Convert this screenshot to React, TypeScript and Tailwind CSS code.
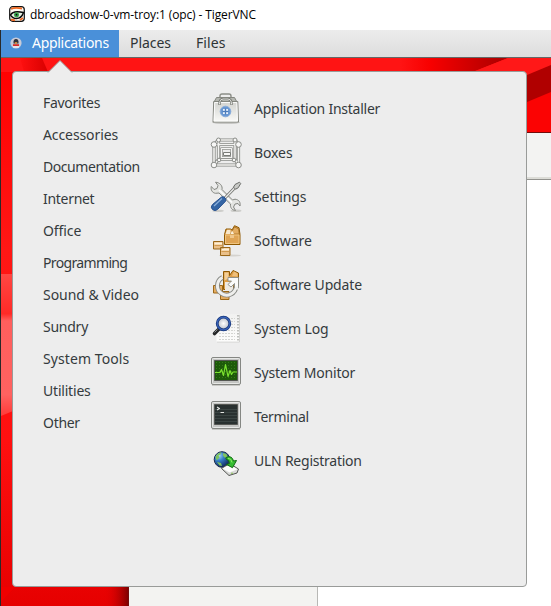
import React from "react";

const categories: [string, string][] = [
  ["Favorites", "tracking-[-0.3px]"],
  ["Accessories", "tracking-[-0.1px]"],
  ["Documentation", "tracking-[-0.44px]"],
  ["Internet", "tracking-[-0.3px]"],
  ["Office", "tracking-[-0.1px]"],
  ["Programming", "tracking-[-0.65px]"],
  ["Sound & Video", "tracking-[-0.05px]"],
  ["Sundry", "tracking-[-0.25px]"],
  ["System Tools", "tracking-[0.08px]"],
  ["Utilities", "tracking-[-0.2px]"],
  ["Other", "tracking-[-0.3px]"],
];

function Icon({ children }: { children: React.ReactNode }) {
  return (
    <svg width="32" height="32" viewBox="0 0 32 32" fill="none" strokeLinejoin="round" className="shrink-0 translate-y-px">
      {children}
    </svg>
  );
}

function InstallerIcon() {
  return (
    <Icon>
      <defs>
        <linearGradient id="bag" x2="0" y2="1">
          <stop stopColor="#d2d3cf" />
          <stop offset="1" stopColor="#fafaf8" />
        </linearGradient>
      </defs>
      <ellipse cx="16" cy="29.600" rx="14" ry="1.500" fill="#c7c7c5" />
      <path d="M10 5V3Q10 1 12 1h7q2 0 2 2v2" stroke="#8b8d86" strokeWidth="1.400" />
      <path d="M6.500 4.500h18l3 5.500h-24z" fill="#b5b7b1" stroke="#858780" />
      <path d="M3.700 8.500h24.100l.7 20.500H3z" fill="url(#bag)" stroke="#858780" />
      <path d="M4.700 9.500h22.100l.6 18.500H4.100z" stroke="#fff" strokeOpacity=".85" />
      <path d="M9.500 12V9.500Q10 6 13 6h5q3 0 3.500 3.500V12" stroke="#6d6f69" strokeWidth="2.200" />
      <path d="M9.500 11.500v-2Q10 6 13 6h5q3 0 3.500 3.500v2" stroke="#e5e6e2" />
      <circle cx="15.500" cy="18.500" r="5.300" fill="#6a98d3" stroke="#86abd9" />
      <path d="M12.500 18.500h6M15.500 15.500v6" stroke="#4c7cba" />
      <g fill="#e9f0f9">
        <rect x="13" y="16" width="1.800" height="1.800" />
        <rect x="16.200" y="16" width="1.800" height="1.800" />
        <rect x="13" y="19.200" width="1.800" height="1.800" />
        <rect x="16.200" y="19.200" width="1.800" height="1.800" />
      </g>
    </Icon>
  );
}

const frame =
  "M4 7.500h24.500v20.500H4zM8.500 3h16.500v19.500H8.500zM4 7.500 8.500 3M28.500 7.500 25 3M4 28 8.500 22.500M28.500 28 25 22.500";

function BoxesIcon() {
  return (
    <Icon>
      <path d={frame} stroke="#858783" strokeWidth="3.200" />
      <path d={frame} stroke="#f3f3f1" strokeWidth="1.600" />
      <path d="M11.500 11.500h10v9h-10z" stroke="#90928e" strokeWidth="2.600" />
      <path d="M11.500 11.500h10v9h-10z" stroke="#f5f5f4" strokeWidth="1.200" />
      <path d="M13.500 15.500h7v3h-7z" fill="#f8f8f7" stroke="#7a7c78" />
      <g fill="#f7f7f6" stroke="#8a8c88">
        <circle cx="4" cy="7.500" r="2.800" />
        <circle cx="28.500" cy="7.500" r="2.800" />
        <circle cx="4" cy="28" r="2.800" />
        <circle cx="28.500" cy="28" r="2.800" />
        <circle cx="8.500" cy="3" r="2" />
        <circle cx="25" cy="3" r="2" />
        <circle cx="9" cy="23" r="1.800" />
        <circle cx="24" cy="23" r="1.800" />
      </g>
    </Icon>
  );
}

function SettingsIcon() {
  return (
    <Icon>
      <ellipse cx="8" cy="29.800" rx="6" ry="1.300" fill="#cdcdca" />
      <ellipse cx="26" cy="29.800" rx="5.500" ry="1.300" fill="#cdcdca" />
      <path
        d="M5.500 1.200 8 4.500 7 7.500 4 8.500 1.300 5.500C.5 8.500 2 11.800 5.500 12.300L9 12l11.500 11c-.5 3.500 1.500 6.300 5 6.500l-2-3.500 1.500-3 3-.5 2 2.500c.8-3.800-1.200-6.500-5-6.800L22.500 19 12 8.500C12.800 5 10 1.500 5.500 1.200z"
        fill="#e4e5e2"
        stroke="#858782"
      />
      <path d="m9 9 13 12.500" stroke="#fff" strokeWidth="1.400" />
      <path d="m14 18 12-12.500" stroke="#6f716d" strokeWidth="3" />
      <path d="m14 18 12-12.500" stroke="#ececea" strokeWidth="1.300" />
      <path d="m25 3.500 4.500-2.300 1.200 1.300-2.500 4.300-2.700 1.400-2-2z" fill="#c9cac7" stroke="#6b6d69" />
      <path d="M11.500 16q2-.8 3.500.800t.5 3.500L7.500 28.500q-2.500 2.200-5 0t0-5z" fill="#3465a4" stroke="#2a5391" />
      <path d="m4 25 8-7.500" stroke="#8bb0db" strokeWidth="1.200" />
    </Icon>
  );
}

function Parcel() {
  return (
    <>
      <path d="M14.500 19.500V9.500L16 4h4.500l1.500 1 2.500-4.300 4.500 2 1 6.800v10z" fill="#d99a45" stroke="#8f5902" />
      <path d="M15.500 9 17 4.700h3.500L20.500 9z" fill="#f7e7cb" />
      <path d="m20.500 9 4-7 4 1.800.7 5.200z" fill="#e3ad62" stroke="#a06b1e" strokeWidth=".7" />
      <path d="m20.500 9 1.500-3.500 2 3.500z" fill="#fbf0da" />
      <path d="M15.500 10h13.500v8.500H15.500z" fill="#dfa454" stroke="#f0c581" />
      <path d="M20 10h4v3h-4z" fill="#efc78b" />
    </>
  );
}

function SoftwareIcon() {
  return (
    <Icon>
      <ellipse cx="20" cy="30.500" rx="11" ry="1" fill="#d5d3cf" />
      <Parcel />
      <path d="M3.500 16.500h9.500v7.500H3.500zM10.500 22.500H20v8h-9.500z" fill="#eac08a" stroke="#9b681a" />
      <path d="M4.500 18.500h7.500M11.500 24.500H19" stroke="#fff0d4" strokeWidth="1.800" />
      <path d="M4.500 20.500h7.500M11.500 26.500H19" stroke="#d19a50" />
    </Icon>
  );
}

function UpdateIcon() {
  const ring = "M12.500 8.500A9.300 9.300 0 1 0 26 17.500V12.500";
  return (
    <Icon>
      <path d="M3.500 16.500h9v7.500H3.500zM10.500 22.500H19v8h-8.500z" fill="#e5ac60" stroke="#9b681a" />
      <path d="M13.500 20.500v-18h6v4l3.500-5 5.500 2.500v13h-5v3.500z" fill="#dd9e49" stroke="#8f5902" />
      <path d="M14.500 3.500h4v6l-4 2z" fill="#f3cf98" />
      <path d="m22 7 2-4.500 3.500 2v3z" fill="#efbf7a" />
      <path d="M15 13h8v8h-8z" fill="#efeae2" />
      <path d={ring} stroke="#888a85" strokeWidth="4.800" />
      <path d={ring} stroke="#efefed" strokeWidth="3" />
      <path d="M18 8.500h10.500V19h-4v-4.500l-3.500 3.500-3-2.500 3.500-3.500H18z" fill="#fbfbfa" stroke="#888a85" strokeWidth=".9" />
      <path d="M24.900 17.500h3.200v3h-3.200z" fill="#f1f1ef" />
    </Icon>
  );
}

function LogIcon() {
  return (
    <Icon>
      <defs>
        <radialGradient id="lens">
          <stop stopColor="#fff" />
          <stop offset="1" stopColor="#b6bdc6" />
        </radialGradient>
        <linearGradient id="paper" x2="0" y2="1">
          <stop stopColor="#f1f1f0" />
          <stop offset="1" stopColor="#fdfdfc" />
        </linearGradient>
      </defs>
      <path d="M7 29h22.500V2" stroke="#d3d3d1" />
      <path d="M6.500 1h22.500v27.500H6.500z" fill="url(#paper)" />
      <path d="M9 5.500h16M9 8.500h16M9 11.500h16M9 14.500h16M9 17.500h16M9 20.500h16M9 23.500h16M9 26.500h16" stroke="#d3d4d1" strokeDasharray="2 1" />
      <path d="M28 2v27" stroke="#aaaca8" strokeWidth="1.500" strokeDasharray="1.500 1.500" />
      <path d="m8.500 16.500-4 4" stroke="#252728" strokeWidth="3.600" strokeLinecap="round" />
      <path d="m7.500 16.500-3 3" stroke="#85878a" />
      <circle cx="13.500" cy="10.500" r="6.300" fill="url(#lens)" stroke="#17367b" strokeWidth="2.800" />
      <circle cx="13.500" cy="10.500" r="6.300" stroke="#3863b8" strokeWidth="1.200" />
    </Icon>
  );
}

function Screen({ fill, children }: { fill: string; children: React.ReactNode }) {
  return (
    <Icon>
      <path d="M2 28h28" stroke="#bcbdb9" strokeWidth="1.500" />
      <rect x="1.500" y=".5" width="29" height="27" rx="1.500" fill="#c4c5c3" stroke="#858783" />
      <rect x="2.500" y="1.500" width="27" height="25" rx=".8" stroke="#e7e8e6" />
      <rect x="4.500" y="3.500" width="23" height="20" fill={fill} stroke="#555753" />
      {children}
    </Icon>
  );
}

function MonitorIcon() {
  return (
    <Screen fill="#1d5a0a">
      <path d="M6 5.500h20M6 8.500h20M6 11.500h20M6 14.500h20M6 17.500h20M6 20.500h20" stroke="#347819" strokeDasharray="1 2" />
      <path d="M5 15.500h5l1.500-3 2 6 2-11 2.500 12 2-6 1.500 4 1.500-2.500h4" stroke="#7be32f" strokeWidth="1.200" />
    </Screen>
  );
}

function TerminalIcon() {
  return (
    <Screen fill="#293130">
      <path d="M5 8.500h22M5 11.500h22M5 14.500h22M5 17.500h22M5 20.500h22" stroke="#3b4543" />
      <path d="M7 6 9.500 7.500 7 9" stroke="#e4e6e3" strokeWidth="1.200" />
      <path d="M10.500 11.500h3.500" stroke="#e4e6e3" />
    </Screen>
  );
}

function UlnIcon() {
  return (
    <Icon>
      <defs>
        <radialGradient id="globe" cx=".3" cy=".25" r=".8">
          <stop stopColor="#a9dcf8" />
          <stop offset=".4" stopColor="#377fc8" />
          <stop offset="1" stopColor="#102658" />
        </radialGradient>
      </defs>
      <circle cx="12" cy="14.500" r="7.800" fill="url(#globe)" stroke="#19294a" />
      <path d="M5.500 12q2-4.500 6-4.500l-1 2-2 1 1 2-3 3zM13 8l3.500 1 1.500 4-3.500-.500-1.500-2zM7 17l4 1 1 3-2.500-.500z" fill="#7fc35d" />
      <path d="m11.500 23.500 8-5 9 5.500-1.500 4-8 2.500z" fill="#d9dad8" stroke="#555753" />
      <path d="m12.500 23.500 7-4 8 4.700-8 3.300z" fill="#fdfdfc" />
      <circle cx="22" cy="28.200" r=".8" fill="#79bd40" />
      <path d="M16 12.500q6-2.500 7.500 3.500l3-.500-4 7.200-6-3.200 3-1q0-3.500-3.500-4.500z" fill="#36bd32" stroke="#126b13" />
      <path d="M18 13.200q3.500.3 4 4.300" stroke="#90ee66" />
    </Icon>
  );
}

const apps: [string, string, () => React.ReactElement][] = [
  ["Application Installer", "tracking-[-0.25px]", InstallerIcon],
  ["Boxes", "tracking-[-0.1px]", BoxesIcon],
  ["Settings", "tracking-[-0.1px]", SettingsIcon],
  ["Software", "tracking-[-0.05px]", SoftwareIcon],
  ["Software Update", "tracking-[-0.15px]", UpdateIcon],
  ["System Log", "tracking-[-0.1px]", LogIcon],
  ["System Monitor", "tracking-[-0.2px]", MonitorIcon],
  ["Terminal", "tracking-[-0.3px]", TerminalIcon],
  ["ULN Registration", "tracking-[-0.24px]", UlnIcon],
];

function TitleBar() {
  return (
    <header className="flex h-[30px] items-center gap-[5px] bg-white pl-[9px] font-['Open_Sans','Noto_Sans',sans-serif] text-[12px] text-black">
      <svg width="16" height="16" viewBox="0 0 16 16" className="-mt-[2px]">
        <rect x=".7" y=".7" width="14.600" height="14.600" rx="3" fill="#fff8f2" stroke="#111" strokeWidth="1.200" />
        <path d="M2 3q4-2 11-.500M2 13.500l4 .8M11 14l3-2" stroke="#ee661e" strokeWidth="1.800" fill="none" />
        <path d="M1.500 9Q4 4 14.500 6.500q-2 6-7 6-4 0-6-3.500z" fill="#e6efe3" stroke="#090909" strokeWidth="1.500" />
        <circle cx="7.500" cy="8.700" r="2.500" fill="#36a549" />
        <circle cx="7.500" cy="8.700" r=".9" fill="#102" />
      </svg>
      <span className="whitespace-nowrap tracking-[-0.12px]">dbroadshow-0-vm-troy:1 (opc) - TigerVNC</span>
    </header>
  );
}

function Panel() {
  return (
    <nav className="flex h-7 border-b border-[#646866] bg-linear-to-b from-[#ececec] to-[#dddddd] text-[14px] leading-[26px] text-[#2e3436]">
      <div className="flex w-[118px] bg-[#4a90d9] pl-[9px] text-white">
        <svg width="12" height="12" viewBox="0 0 12 12" className="mt-[7px] mr-[10px] shrink-0">
          <circle cx="6" cy="6" r="5.600" fill="#c9cbd8" />
          <path d="M3.500 6.500q-.5-4.500 2.500-4.500t2.500 4.500z" fill="#30313c" />
          <path d="M4.500 5.200h3L6 7.500z" fill="#f2a33a" />
          <path d="M3 7.200h6v1.800h-6z" fill="#d62b26" />
          <path d="M3 10h6" stroke="#fff" />
        </svg>
        <span className="tracking-[-0.3px]">Applications</span>
      </div>
      <span className="w-[66px] pl-[11px] tracking-[-0.05px]">Places</span>
      <span className="pl-[11px] tracking-[0.1px]">Files</span>
    </nav>
  );
}

function Wallpaper() {
  return (
    <svg className="absolute inset-0" width="550" height="548" viewBox="1 58 550 548">
      <defs>
        <linearGradient id="side" x2="0" y2="1">
          <stop stopColor="#f00" />
          <stop offset=".35" stopColor="#ff1715" />
          <stop offset=".7" stopColor="#ff1010" />
          <stop offset="1" stopColor="#e60000" />
        </linearGradient>
        <linearGradient id="fold">
          <stop stopColor="#ff1010" />
          <stop offset="1" stopColor="#d80000" />
        </linearGradient>
        <linearGradient id="ridge" x1="400" x2="500" gradientUnits="userSpaceOnUse">
          <stop stopColor="#ff1414" />
          <stop offset=".3" stopColor="#f80000" />
          <stop offset="1" stopColor="#b00000" />
        </linearGradient>
        <linearGradient id="shade">
          <stop stopColor="#e60000" stopOpacity="0" />
          <stop offset="1" stopColor="#780000" />
        </linearGradient>
        <linearGradient id="glow" x2="0" y2="1">
          <stop stopColor="#ff4743" />
          <stop offset=".28" stopColor="#ff2a27" />
          <stop offset=".33" stopColor="#ff5f5d" />
          <stop offset=".85" stopColor="#ff6260" />
          <stop offset="1" stopColor="#ff3a38" />
        </linearGradient>
      </defs>
      <path d="M1 58h550v548H1z" fill="url(#side)" />
      <path d="M1 58h550v14H1z" fill="#ff1414" />
      <path d="M20 58h22l6 14H24z" fill="url(#fold)" />
      <path d="M400 58h108l-33 13h-75z" fill="url(#ridge)" />
      <path d="M508 58h43v9l-24 9-54-4z" fill="#ff1818" />
      <path d="m527 75 24-10v28l-24 10z" fill="#b00000" />
      <path d="m527 102 24-10v42h-24z" fill="#fb0303" />
      <path d="M1 274h12v137L1 416z" fill="url(#glow)" />
      <path d="M1 587h14L1 602z" fill="#f00000" />
      <path d="M104 587h25v19h-25z" fill="url(#shade)" />
    </svg>
  );
}

export default function App() {
  return (
    <main className="flex h-[606px] w-[551px] flex-col overflow-hidden bg-white font-['Noto_Sans',sans-serif]">
      <TitleBar />
      <div className="flex min-h-0 flex-1 flex-col border-l border-[#292929]">
        <Panel />
        <section className="relative flex-1 overflow-hidden">
          <Wallpaper />
          <div className="absolute top-[74px] left-[127px] flex h-[480px] w-[423px] flex-col border-t border-l border-[#730b0b] bg-white">
            <div className="h-[47px] shrink-0 border-b border-[#92928e] bg-[#f3f3f2] shadow-[inset_0_-2px_0_#dcdcd7]" />
            <div className="h-full w-[189px] border-r border-[#b8b8b5] bg-[#f3f3f1]" />
          </div>
          <div className="absolute top-[13px] left-[11px] flex h-[516px] w-[515px] rounded-[4px] border border-[#999b99] bg-[#ededed] text-[14px] text-[#353b3d]">
            <svg className="absolute -top-[12px] left-[34px]" width="26" height="13" viewBox="0 0 26 13">
              <path d="m1 12.500 12-12 12 12" fill="#ededed" stroke="#999b99" />
              <path d="M2 12.500h22" stroke="#ededed" />
            </svg>
            <ul className="w-[197px] pt-[15px] pl-[30px]">
              {categories.map(([name, tracking]) => (
                <li key={name} className="h-8 leading-8 whitespace-nowrap">
                  <span className={tracking}>{name}</span>
                </li>
              ))}
            </ul>
            <ul className="pt-[14px]">
              {apps.map(([name, tracking, Glyph]) => (
                <li key={name} className="flex h-11 items-center gap-[12px] whitespace-nowrap">
                  <Glyph />
                  <span className={tracking}>{name}</span>
                </li>
              ))}
            </ul>
          </div>
        </section>
      </div>
    </main>
  );
}
